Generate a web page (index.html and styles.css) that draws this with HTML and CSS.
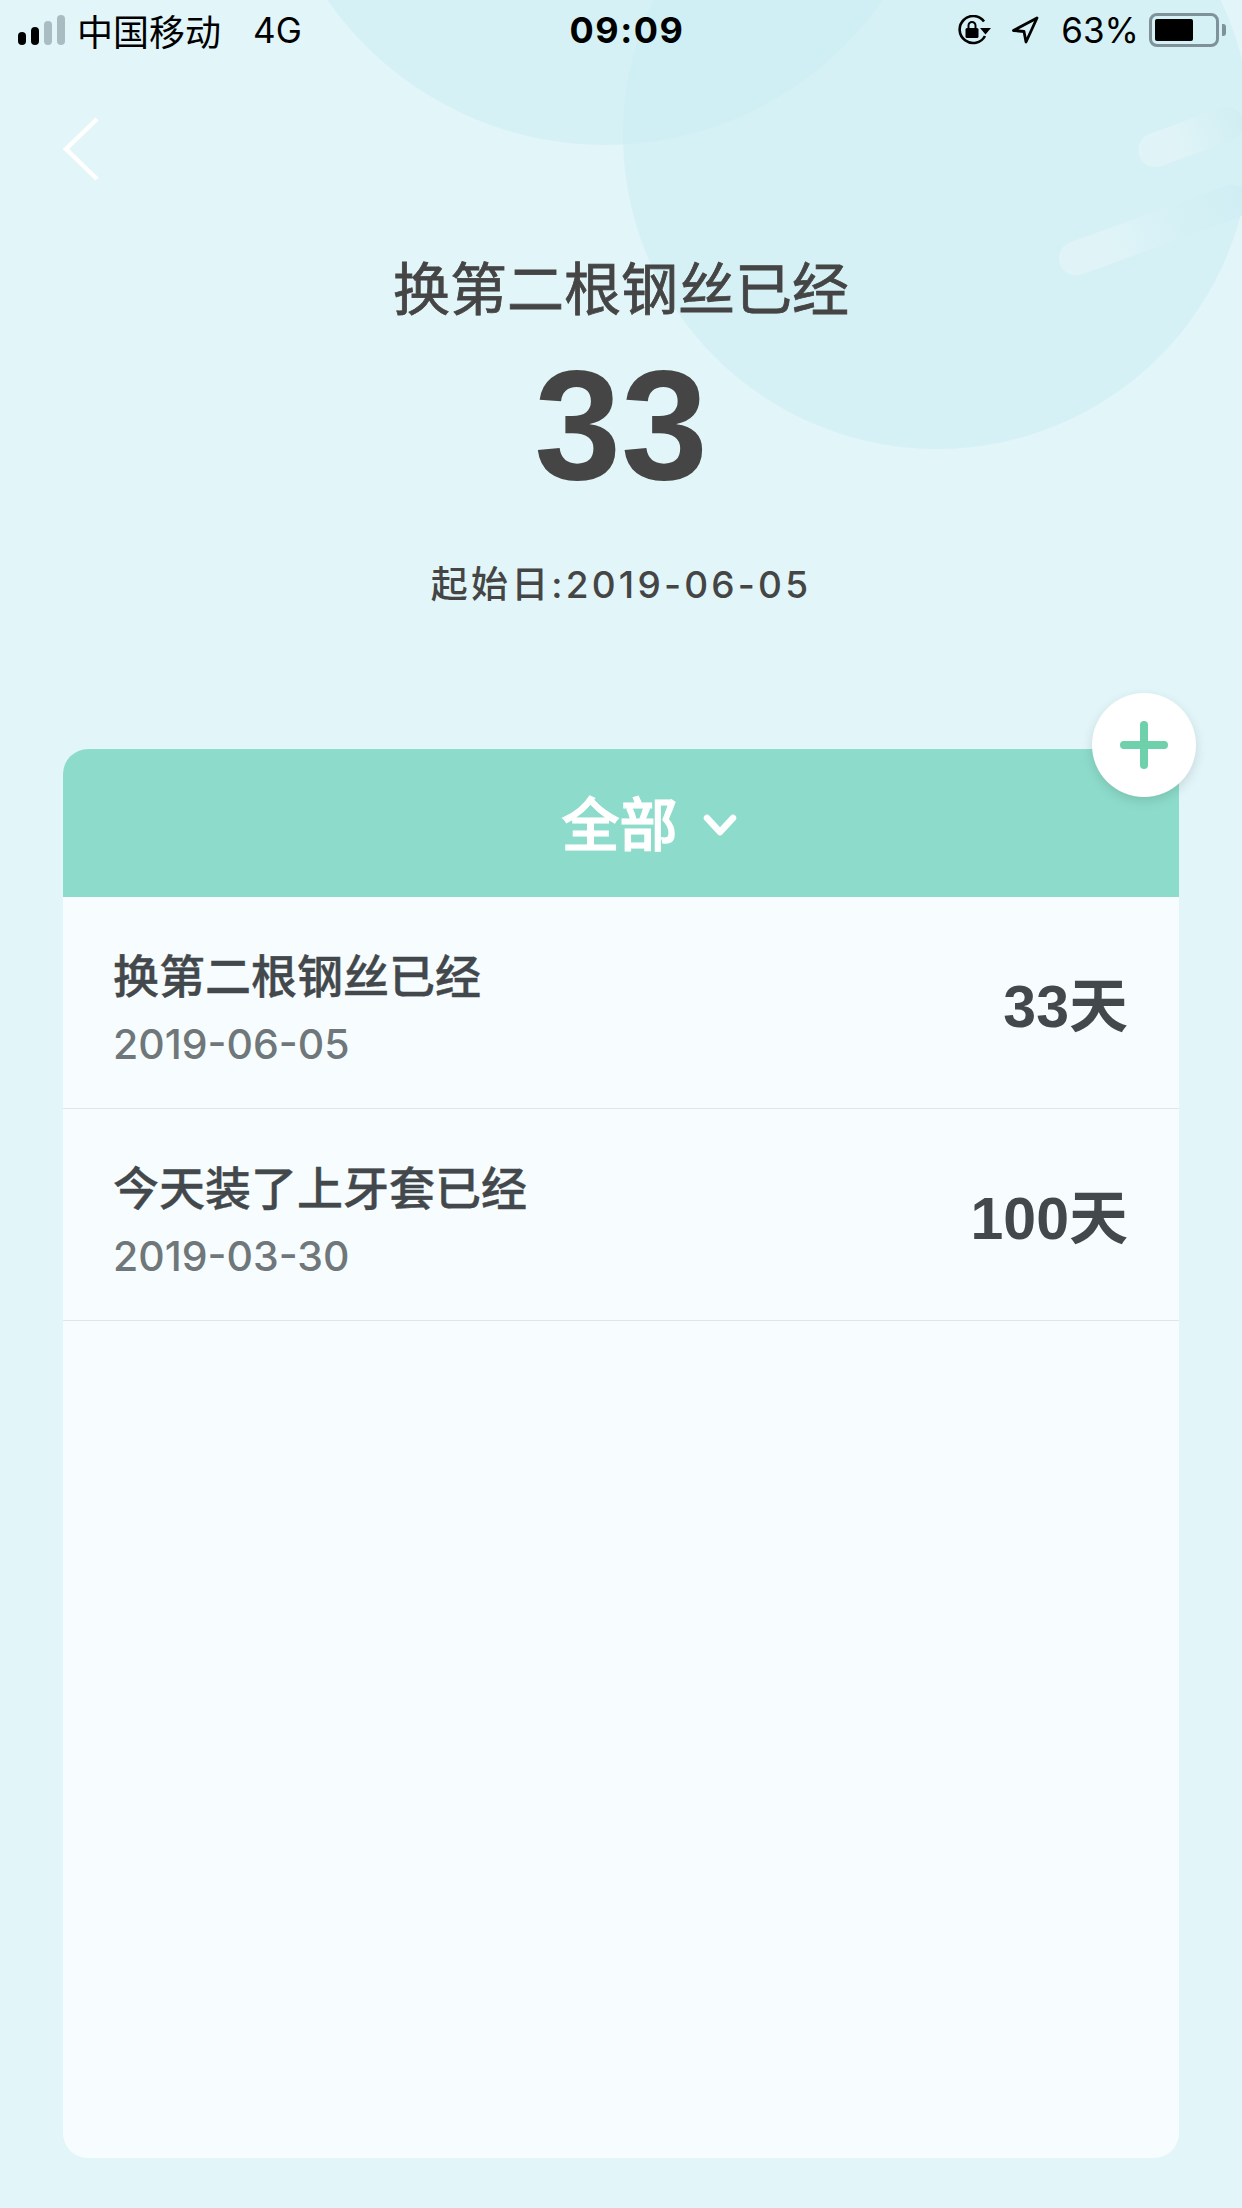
FILE: index.html
```html
<!DOCTYPE html>
<html lang="zh">
<head>
  <meta charset="UTF-8" />
  <title>换第二根钢丝已经</title>
  <link rel="stylesheet" href="styles.css">
</head>
<body>
  <div class="screen">
    <!-- background circles -->
    <div class="blob blob-top"></div>
    <div class="blob blob-right"></div>
    <div class="streak streak-one"></div>
    <div class="streak streak-two"></div>

    <div class="statusbar">
      <div class="status-left">
        <div class="signal">
          <span class="bar bar-1"></span>
          <span class="bar bar-2"></span>
          <span class="bar bar-3"></span>
          <span class="bar bar-4"></span>
        </div>
        <span class="carrier">中国移动</span>
        <span class="network">4G</span>
      </div>
      <div class="status-time">09:09</div>
      <div class="status-right">
        <svg class="icon-lock" viewBox="0 0 34 30">
          <path d="M27 6.500A13.500 13.500 0 1 0 28 21" fill="none" stroke="#000" stroke-width="2.600"/>
          <path d="M23 13h11l-5.500 6.500z" fill="#000"/>
          <rect x="8.500" y="13" width="13" height="10" rx="1.500" fill="#000"/>
          <path d="M11.500 13v-2.500a3.500 3.500 0 0 1 7 0V13" fill="none" stroke="#000" stroke-width="2"/>
        </svg>
        <svg class="icon-location" viewBox="0 0 28 28">
          <path d="M26 2 2.500 14.500 13 15.500 15 26z" fill="none" stroke="#000" stroke-width="2.800" stroke-linejoin="round"/>
        </svg>
        <span class="battery-text">63%</span>
        <div class="battery">
          <div class="battery-body"><div class="battery-fill"></div></div>
          <div class="battery-tip"></div>
        </div>
      </div>
    </div>

    <div class="navbar">
      <svg class="icon-back" viewBox="0 0 38 66">
        <path d="M35 3 4 33l31 30" fill="none" stroke="#fff" stroke-width="4.500"/>
      </svg>
    </div>

    <div class="summary">
      <h1 class="summary-title">换第二根钢丝已经</h1>
      <div class="summary-count">33</div>
      <div class="summary-date">起始日:2019-06-05</div>
    </div>

    <div class="card">
      <button class="add-btn" aria-label="添加">
        <svg viewBox="0 0 48 48">
          <path d="M24 4v40M4 24h40" fill="none" stroke="#6fd0ac" stroke-width="8" stroke-linecap="round"/>
        </svg>
      </button>
      <div class="card-header">
        <span>全部</span>
        <svg class="icon-down" viewBox="0 0 34 22">
          <path d="M4 4l13 14L30 4" fill="none" stroke="#fff" stroke-width="6.500" stroke-linecap="round" stroke-linejoin="round"/>
        </svg>
      </div>
      <div class="row">
        <div class="row-main">
          <div class="row-title">换第二根钢丝已经</div>
          <div class="row-date">2019-06-05</div>
        </div>
        <div class="row-days">33天</div>
      </div>
      <div class="row">
        <div class="row-main">
          <div class="row-title">今天装了上牙套已经</div>
          <div class="row-date">2019-03-30</div>
        </div>
        <div class="row-days">100天</div>
      </div>
    </div>
  </div>
</body>
</html>
```

FILE: styles.css
```css
body {
  margin: 0;
  font-family: Inter, "Noto Sans CJK SC", sans-serif;
  background: #e2f5f8;
}
.screen {
  position: relative;
  width: 1242px;
  height: 2208px;
  overflow: hidden;
  background: #e2f5f8;
  display: flex;
  flex-direction: column;
}
/* background decoration */
.blob {
  position: absolute;
  border-radius: 50%;
  background: rgba(204, 237, 243, 0.55);
}
.blob-top {
  left: 267px;
  top: -531px;
  width: 676px;
  height: 676px;
}
.blob-right {
  left: 623px;
  top: -179px;
  width: 628px;
  height: 628px;
}
.streak {
  position: absolute;
  height: 34px;
  border-radius: 17px;
  transform: rotate(-20deg);
}
.streak-one {
  left: 1136px;
  top: 120px;
  width: 110px;
  background: linear-gradient(to right, #e0f4f7 35%, #d0eef3);
}
.streak-two {
  left: 1054px;
  top: 213px;
  width: 200px;
  background: linear-gradient(to right, #e0f4f7 25%, #d7f1f6 55%, #cfeef3);
}

/* status bar */
.statusbar {
  position: relative;
  height: 60px;
  display: flex;
  align-items: center;
  justify-content: space-between;
  padding: 0 16px 0 18px;
  color: #000;
}
.status-left {
  display: flex;
  align-items: center;
  width: 400px;
}
.signal {
  display: flex;
  align-items: flex-end;
  gap: 5px;
  height: 30px;
  margin-right: 12px;
}
.bar {
  width: 8px;
  border-radius: 4px;
  background: #000;
}
.bar-1 { height: 13px; }
.bar-2 { height: 18px; }
.bar-3 { height: 24px; background: #a9bcc2; }
.bar-4 { height: 30px; background: #a9bcc2; }
.carrier {
  font-size: 36px;
}
.network {
  font-size: 35px;
  margin-left: 32px;
}
.status-time {
  font-size: 36px;
  font-weight: 700;
  letter-spacing: 1.5px;
  margin-left: 10px;
}
.status-right {
  display: flex;
  align-items: center;
  justify-content: flex-end;
  width: 400px;
}
.icon-lock {
  width: 34px;
  height: 30px;
  margin-right: 20px;
}
.icon-location {
  width: 28px;
  height: 28px;
  margin-right: 22px;
}
.battery-text {
  font-size: 35px;
  margin-right: 10px;
}
.battery {
  display: flex;
  align-items: center;
}
.battery-body {
  width: 70px;
  height: 34px;
  box-sizing: border-box;
  border: 3px solid #7f9299;
  border-radius: 8px;
  padding: 3px;
}
.battery-fill {
  width: 38px;
  height: 100%;
  background: #000;
  border-radius: 2px;
}
.battery-tip {
  width: 4px;
  height: 12px;
  margin-left: 3px;
  background: #7f9299;
  border-radius: 0 3px 3px 0;
}

/* back button */
.navbar {
  position: relative;
  height: 124px;
  padding-left: 62px;
  display: flex;
  align-items: flex-start;
}
.icon-back {
  width: 38px;
  height: 66px;
  margin-top: 56px;
}

/* big counter */
.summary {
  position: relative;
  height: 565px;
  text-align: center;
  color: #454545;
}
.summary-title {
  margin: 73px 0 0;
  font-size: 57px;
  line-height: 66px;
  font-weight: normal;
  -webkit-text-stroke: 0.8px #454545;
}
.summary-count {
  margin-top: 17px;
  font-family: "Liberation Sans", sans-serif;
  font-size: 156px;
  line-height: 170px;
  font-weight: bold;
}
.summary-date {
  margin-top: 53px;
  font-size: 37px;
  line-height: 44px;
  font-weight: 500;
  letter-spacing: 3.2px;
}

/* list card */
.card {
  position: relative;
  width: 1116px;
  height: 1409px;
  margin-left: 63px;
  background: #f7fdfe;
  border-radius: 25px;
}
.card-header {
  height: 148px;
  box-sizing: border-box;
  padding: 0 0 4px 56px;
  display: flex;
  align-items: center;
  justify-content: center;
  gap: 25px;
  background: #8ddccb;
  border-radius: 25px 25px 0 0;
  color: #fff;
  font-size: 58px;
  font-weight: 500;
  -webkit-text-stroke: 1.2px #fff;
}
.icon-down {
  width: 34px;
  height: 22px;
  margin-top: 8px;
}
.add-btn {
  position: absolute;
  right: -17px;
  top: -56px;
  width: 104px;
  height: 104px;
  padding: 28px;
  border: none;
  border-radius: 50%;
  background: #fff;
  box-shadow: 0 4px 12px rgba(0, 0, 0, 0.12);
}
.add-btn svg {
  display: block;
  width: 48px;
  height: 48px;
}
.row {
  height: 212px;
  box-sizing: border-box;
  padding: 0 51px 0 50px;
  display: flex;
  align-items: center;
  justify-content: space-between;
  border-bottom: 1px solid #dfe6e8;
}
.row-main {
  padding-top: 9px;
}
.row-title {
  font-size: 46px;
  line-height: 56px;
  font-weight: 500;
  color: #43484c;
  -webkit-text-stroke: 0.4px #43484c;
}
.row-date {
  margin-top: 17px;
  font-size: 41px;
  line-height: 46px;
  font-weight: 500;
  color: #6f777b;
}
.row-days {
  font-family: "Liberation Sans", "Noto Sans CJK SC", sans-serif;
  font-size: 59px;
  font-weight: bold;
  color: #43484c;
  margin-bottom: 2px;
}
```
